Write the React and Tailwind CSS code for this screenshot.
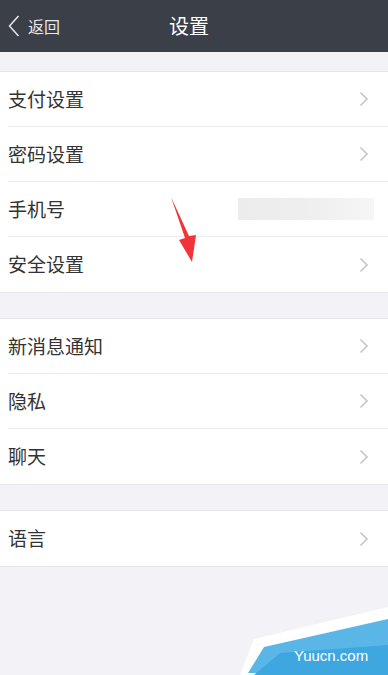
import React from "react";

const groups = [
  [
    { label: "支付设置" },
    { label: "密码设置" },
    { label: "手机号", phone: true },
    { label: "安全设置" },
  ],
  [{ label: "新消息通知" }, { label: "隐私" }, { label: "聊天" }],
  [{ label: "语言" }],
];

function Chevron() {
  return (
    <svg width="10" height="16" viewBox="0 0 10 16" fill="none">
      <path d="M1.5 1.5 L8 8 L1.5 14.5" stroke="#c5c5ca" strokeWidth="1.6" />
    </svg>
  );
}

function Row({ item, last }) {
  return (
    <div className="flex h-[55px] items-stretch bg-white pl-2">
      <div className={`flex flex-1 items-center justify-between pr-[19px] ${last ? "" : "border-b border-[#ececf0]"}`}>
        <span className="text-[19px] text-[#333]">{item.label}</span>
        {item.phone ? (
          <div className="mr-[-5px] h-[22px] w-[136px] bg-gradient-to-r from-[#ececec] via-[#eeeeee] to-[#f6f6f6]" />
        ) : (
          <Chevron />
        )}
      </div>
    </div>
  );
}

export default function App() {
  return (
    <div
      className="relative h-[675px] w-[388px] overflow-hidden bg-[#f3f3f7]"
      style={{ fontFamily: '"Noto Sans CJK SC", "Noto Sans", sans-serif' }}
    >
      <header className="relative flex h-[52px] items-center bg-[#3b3f48] text-white">
        <div className="flex items-center pl-2">
          <svg width="12" height="22" viewBox="0 0 12 22" fill="none">
            <path d="M10.5 1 L1.5 11 L10.5 21" stroke="#e8e8ea" strokeWidth="1.5" />
          </svg>
          <span className="ml-[8px] text-[16px] text-[#e8e8ea]">返回</span>
        </div>
        <h1 className="absolute left-[189px] -translate-x-1/2 text-[20px]">设置</h1>
      </header>

      <div className="flex flex-col gap-[25px] pt-[19px]">
        {groups.map((g, gi) => (
          <div key={gi} className="border-y border-[#e6e6ea]">
            {g.map((item, i) => (
              <Row key={item.label} item={item} last={i === g.length - 1} />
            ))}
          </div>
        ))}
      </div>

      {/* red annotation arrow */}
      <svg className="absolute left-[165px] top-[194px]" width="40" height="72" viewBox="0 0 40 72">
        <polygon points="6,3 20,44 14,46 27,68 31,41 24,42" fill="#f0343a" />
      </svg>

      {/* watermark */}
      <svg className="absolute bottom-0 right-0" width="148" height="80" viewBox="0 0 148 80">
        <polygon points="0,80 14,44 148,12 148,80" fill="#ffffff" />
        <polygon points="8,78 24,52 148,24 148,80" fill="#5bb6e8" />
        <polygon points="40,58 148,50 148,80 14,80" fill="#3fa7e0" />
        <text x="54" y="66" fill="#ffffff" fontSize="15" fontFamily="Liberation Sans, sans-serif">Yuucn.com</text>
      </svg>
    </div>
  );
}
